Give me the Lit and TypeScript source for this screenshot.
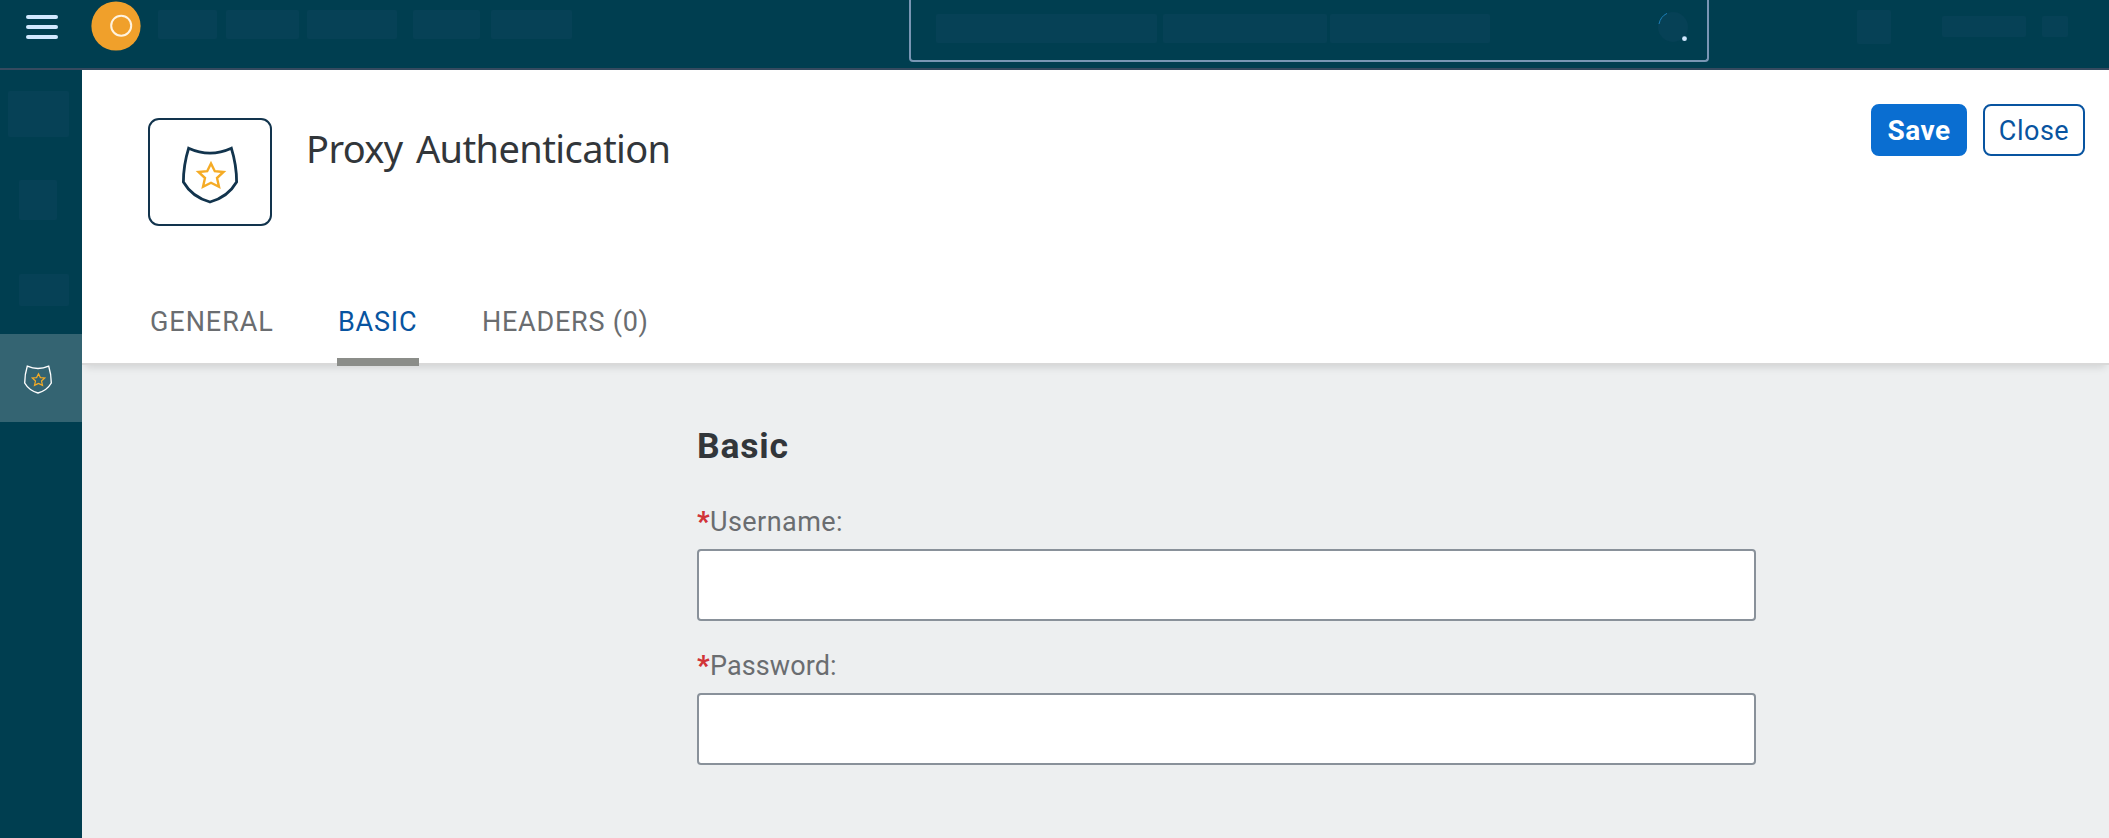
import { LitElement, html, css } from "lit";
import { customElement, property } from "lit/decorators.js";

@customElement("shield-icon")
class ShieldIcon extends LitElement {
  static styles = css`
    :host { display: block; color: #12344d; }
    svg { display: block; width: 100%; height: 100%; overflow: visible; }
  `;
  render() {
    return html`<svg viewBox="0 0 56 58" fill="none">
      <path d="M6.6 2.3Q28 12 49.4 2.3Q54.6 19 54.6 36Q46 51 28 56Q10 51 1.4 36Q1.4 19 6.6 2.3Z" stroke="currentColor" stroke-width="2.8"/>
      <path d="M29 17.5L32.8 25.2L41.5 26L35 32L37 40.8L29 36.8L21 40.8L23 32L16.5 26L25.2 25.2Z" stroke="#f5ab25" stroke-width="2.4"/>
    </svg>`;
  }
}

@customElement("form-field")
class FormField extends LitElement {
  @property() label = "";
  @property() type = "text";
  static styles = css`
    :host { display: block; height: 144px; letter-spacing: .45px; }
    :host([type="password"]) { letter-spacing: .1px; }
    label { display: block; height: 44px; line-height: 34px; color: #6a6d70; font-size: 27px; white-space: nowrap; }
    .star { display: inline-block; width: 13px; color: #d13438; font-weight: 900; letter-spacing: 0; }
    input { display: block; box-sizing: border-box; width: 100%; height: 72px; margin: 0; padding: 0 16px; border: 2px solid #89919a; border-radius: 4px; background: #fff; font: inherit; font-size: 27px; outline: none; }
  `;
  render() {
    return html`<label for="f"><span class="star">*</span><span>${this.label}</span></label><input id="f" type=${this.type} />`;
  }
}

@customElement("app-root")
class AppRoot extends LitElement {
  static styles = css`
    :host { display: flex; flex-direction: column; height: 838px; overflow: hidden; background: #edeff0; font-family: Roboto, "Noto Sans", sans-serif; color: #32363a; }
    .shell { box-sizing: border-box; height: 70px; flex: none; display: flex; align-items: flex-start; background: #003e50; border-bottom: 2px solid #354a5f; }
    .menu { display: grid; gap: 6px; margin: 15px 33px 0 26px; width: 32px; }
    .menu i { height: 4px; border-radius: 2px; background: #d1e8ff; }
    .logo { display: block; width: 50px; height: 50px; margin-top: 1px; }
    .ph { border-radius: 2px; background: #064156; }
    .crumbs { display: flex; margin: 10px 0 0 17px; width: 414px; }
    .crumbs .ph { height: 29px; }
    .c1 { width: 59px; margin-right: 9px; } .c2 { width: 73px; margin-right: 8px; } .c3 { width: 90px; margin-right: 16px; } .c4 { width: 67px; margin-right: 11px; } .c5 { width: 81px; }
    .search { box-sizing: border-box; display: flex; width: 800px; height: 62px; margin-left: 337px; border: 2px solid #7996b4; border-top: 0; border-radius: 0 0 4px 4px; padding: 14px 0 0 25px; }
    .search .ph { height: 29px; }
    .q1 { width: 221px; } .q2 { width: 164px; margin-left: 6px; } .q3 { width: 160px; margin-left: 3px; }
    .lens { width: 30px; height: 30px; margin: -2px 0 0 168px; }
    .u1 { width: 34px; height: 34px; margin: 10px 0 0 148px; }
    .u2 { width: 84px; height: 21px; margin: 16px 0 0 51px; }
    .u3 { width: 26px; height: 21px; margin: 16px 0 0 16px; }
    .body { flex: 1; display: flex; min-height: 0; }
    nav { width: 82px; flex: none; background: #003e50; display: flex; flex-direction: column; }
    .n1 { margin: 21px 0 0 8px; width: 61px; height: 46px; }
    .n2 { margin: 43px 0 0 19px; width: 38px; height: 40px; }
    .n3 { margin: 54px 0 28px 19px; width: 50px; height: 32px; }
    .active { height: 88px; background: #346472; padding: 31px 0 0 24px; box-sizing: border-box; }
    .active shield-icon { width: 28px; height: 29px; color: #fff; }
    main { flex: 1; min-width: 0; }
    header { box-sizing: border-box; height: 295px; background: #fff; border-bottom: 2px solid #d9d9d9; box-shadow: 0 5px 8px -3px rgba(0,0,0,.13); display: flex; flex-direction: column; clip-path: inset(0 0 -14px 0); }
    .top { display: flex; height: 212px; flex: none; padding: 0 24px 0 66px; }
    .card { box-sizing: border-box; width: 124px; height: 108px; margin-top: 48px; border: 2.6px solid #12344d; border-radius: 11px; padding: 26px 0 0 32px; }
    .card shield-icon { width: 56px; height: 58px; }
    h1 { margin: 53px 0 0 34px; height: 50px; line-height: 50px; font-family: "Noto Sans", sans-serif; font-size: 38px; font-weight: 400; letter-spacing: -.6px; word-spacing: 4px; white-space: nowrap; flex: 1; }
    .actions { display: flex; gap: 16px; margin-top: 34px; }
    button { box-sizing: border-box; height: 52px; padding: 1px 0 0; border: 2px solid #0854a0; border-radius: 8px; background: #fff; color: #0854a0; font: 400 27px/47px Roboto, sans-serif; letter-spacing: .5px; }
    .save { width: 96px; background: #0a6ed1; border-color: #0a6ed1; color: #fff; font-weight: 700; font-size: 28px; }
    .close { width: 102px; padding-top: 2px; }
    .tabs { display: flex; padding-left: 68px; height: 84px; flex: none; font-size: 27px; line-height: 81px; color: #6a6d70; }
    .tab { white-space: nowrap; box-sizing: border-box; height: 84px; }
    .t1 { width: 187px; letter-spacing: .95px; } .t2 { width: 82px; margin-right: 63px; padding-left: 1px; letter-spacing: .8px; } .t3 { letter-spacing: .75px; }
    .sel { color: #0854a0; border-bottom: 8px solid #8b8d89; }
    section { width: 1059px; padding: 57px 0 0 615px; }
    h2 { margin: 0 0 35px; height: 48px; line-height: 49px; font-size: 35.5px; font-weight: 700; letter-spacing: .8px; }
  `;
  render() {
    return html`
      <div class="shell">
        <div class="menu"><i></i><i></i><i></i></div>
        <svg class="logo" viewBox="0 0 50 50"><circle cx="25" cy="25" r="24.6" fill="#f0a02b"/><circle cx="30.2" cy="24.7" r="10" fill="none" stroke="#fff3df" stroke-width="2"/></svg>
        <div class="crumbs">${[1, 2, 3, 4, 5].map((n) => html`<span class="ph c${n}"></span>`)}</div>
        <div class="search">
          <span class="ph q1"></span><span class="ph q2"></span><span class="ph q3"></span>
          <svg class="lens" viewBox="0 0 30 30"><circle cx="15" cy="15" r="15" fill="#064156"/><path d="M1 12Q2.5 4.5 9 1.4" fill="none" stroke="#1b7fb8" stroke-width="1"/><circle cx="26.5" cy="26.7" r="2.4" fill="#d1e8ff"/></svg>
        </div>
        <span class="ph u1"></span><span class="ph u2"></span><span class="ph u3"></span>
      </div>
      <div class="body">
        <nav><span class="ph n1"></span><span class="ph n2"></span><span class="ph n3"></span><div class="active"><shield-icon></shield-icon></div></nav>
        <main>
          <header>
            <div class="top">
              <div class="card"><shield-icon></shield-icon></div>
              <h1>Proxy Authentication</h1>
              <div class="actions"><button class="save">Save</button><button class="close">Close</button></div>
            </div>
            <div class="tabs"><div class="tab t1">GENERAL</div><div class="tab t2 sel">BASIC</div><div class="tab t3">HEADERS (0)</div></div>
          </header>
          <section>
            <h2>Basic</h2>
            <form-field label="Username:"></form-field>
            <form-field label="Password:" type="password"></form-field>
          </section>
        </main>
      </div>`;
  }
}
